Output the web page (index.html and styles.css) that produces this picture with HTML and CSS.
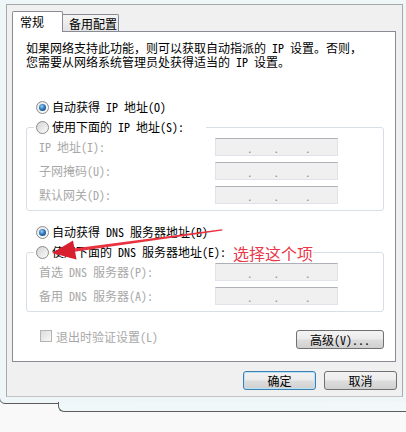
FILE: index.html
```html
<!DOCTYPE html>
<html lang="zh-CN">
<head>
<meta charset="utf-8">
<link rel="stylesheet" href="styles.css">
</head>
<body>
<div class="desk">
  <div class="window">
    <div class="client">
      <div class="tabs">
        <div class="tab active">常规</div>
        <div class="tab">备用配置</div>
      </div>
      <div class="panel">
        <p class="intro">如果网络支持此功能，则可以获取自动指派的 IP 设置。否则，<br>您需要从网络系统管理员处获得适当的 IP 设置。</p>
        <div class="radio-row top"><span class="radio on"></span><span>自动获得 IP 地址(O)</span></div>
        <fieldset class="group">
          <legend class="radio-row leg1"><span class="radio"></span><span>使用下面的 IP 地址(S):</span></legend>
          <div class="fields">
            <div class="field"><span class="lbl">IP 地址(I):</span><span class="ipbox"><span class="d1">.</span><span class="d2">.</span><span class="d3">.</span></span></div>
            <div class="field"><span class="lbl">子网掩码(U):</span><span class="ipbox"><span class="d1">.</span><span class="d2">.</span><span class="d3">.</span></span></div>
            <div class="field"><span class="lbl">默认网关(D):</span><span class="ipbox"><span class="d1">.</span><span class="d2">.</span><span class="d3">.</span></span></div>
          </div>
        </fieldset>
        <div class="radio-row mid"><span class="radio on"></span><span>自动获得 DNS 服务器地址(B)</span></div>
        <fieldset class="group">
          <legend class="radio-row leg2"><span class="radio"></span><span>使用下面的 DNS 服务器地址(E):</span></legend>
          <div class="fields">
            <div class="field"><span class="lbl">首选 DNS 服务器(P):</span><span class="ipbox"><span class="d1">.</span><span class="d2">.</span><span class="d3">.</span></span></div>
            <div class="field"><span class="lbl">备用 DNS 服务器(A):</span><span class="ipbox"><span class="d1">.</span><span class="d2">.</span><span class="d3">.</span></span></div>
          </div>
        </fieldset>
        <div class="bottom-row">
          <label class="check"><span class="box"></span><span>退出时验证设置(L)</span></label>
          <button class="btn adv">高级(V)...</button>
        </div>
      </div>
      <div class="actions">
        <button class="btn default">确定</button>
        <button class="btn">取消</button>
      </div>
    </div>
  </div>
  <div class="backwin"></div>
  <svg class="arrow" viewBox="0 0 406 432" width="406" height="432">
    <polygon points="222,229.2 222.5,230.6 74.5,251.8 73.5,248.4" fill="#e8323e"/>
    <polygon points="52,253 73,240.5 76.5,259.5" fill="#d8202f"/>
  </svg>
  <div class="note">选择这个项</div>
</div>
</body>
</html>
```

FILE: styles.css
```css
* { box-sizing: border-box; }
html, body { margin: 0; padding: 0; }
body {
  background: #f9f9f9;
  font-family: "Noto Sans Mono CJK SC", "Noto Sans CJK SC", sans-serif;
  font-size: 12px;
  color: #000;
  width: 406px;
  height: 432px;
  overflow: hidden;
}
.desk { position: relative; width: 406px; height: 432px; overflow: hidden; }

.window {
  position: absolute;
  left: -1px;
  top: -20px;
  width: 420px;
  height: 424px;
  background: #eff6f8;
  border: 1px solid #5c5c5c;
  border-radius: 0 0 0 6px;
  padding: 23px 0 0 6px;
}
.client {
  width: 397px;
  height: 393px;
  background: #f0f0f0;
  border: 1px solid #a9a9a9;
  border-bottom-color: #c4c4c4;
  padding: 6px 0 0 5px;
}

.tabs { display: flex; align-items: flex-end; height: 20px; }
.tab {
  font-family: "Noto Sans CJK SC", sans-serif;
  border: 1px solid #898c95;
  border-bottom: none;
  line-height: 15px;
}
.tab.active {
  position: relative;
  z-index: 1;
  width: 51px;
  height: 21px;
  margin-bottom: -1px;
  background: #fff;
  border-radius: 2px 2px 0 0;
  padding: 2px 0 0 7px;
  line-height: 16px;
}
.tab:not(.active) {
  width: 56px;
  height: 17px;
  border-left: none;
  border-radius: 0 2px 0 0;
  background: linear-gradient(#f4f4f4, #e3e3e3);
  padding: 1px 0 0 6px;
}

.panel {
  width: 384px;
  height: 331px;
  background: #fff;
  border: 1px solid #898c95;
  padding: 9px 11px 0 13px;
}
.intro { margin: 0; line-height: 14px; white-space: nowrap; }

.radio-row {
  display: flex;
  align-items: center;
  gap: 3px;
  height: 16px;
  white-space: nowrap;
  line-height: 16px;
}
.radio-row.top { margin: 30px 0 0 10px; }
.radio-row.mid { margin: 13px 0 0 10px; }
.radio {
  flex: none;
  width: 13px;
  height: 13px;
  border-radius: 50%;
  border: 1px solid #8b8b8b;
  background: linear-gradient(135deg, #d4d4d4, #fbfbfb);
}
.radio.on {
  display: grid;
  place-items: center;
  background: linear-gradient(135deg, #e6e6e6, #ffffff);
}
.radio.on::after {
  content: "";
  width: 7px;
  height: 7px;
  border-radius: 50%;
  background: radial-gradient(circle at 40% 35%, #9fd0f5 0, #2d78bb 45%, #0c3c6e 100%);
}

.group {
  margin: 4px 0 0 0;
  width: 358px;
  padding: 3px 6px 6px 7px;
  border: 1px solid #d5dfe5;
  border-radius: 3px;
  min-width: 0;
}
.group legend { padding: 0 0 0 2px; }
.leg1 { width: 172px; }
.leg2 { width: 279px; }

.fields { display: flex; flex-direction: column; gap: 6px; }
.field {
  display: grid;
  grid-template-columns: 176px 123px;
  align-items: center;
  height: 18px;
  margin-left: 5px;
}
.lbl { color: #a8a8a8; white-space: nowrap; line-height: 16px; }
.ipbox {
  display: flex;
  align-items: flex-end;
  height: 18px;
  background: #f0f0f0;
  border: 1px solid #e2e3ea;
  border-top-color: #adb0b6;
  padding: 0 0 2px 31px;
  line-height: 9px;
  font-size: 11px;
  color: #8a8a8a;
}
.ipbox .d2 { margin-left: 21px; }
.ipbox .d3 { margin-left: 26px; }

.bottom-row {
  display: flex;
  justify-content: space-between;
  align-items: flex-start;
  margin-top: 16px;
  height: 21px;
}
.check {
  display: flex;
  align-items: center;
  gap: 4px;
  height: 16px;
  margin-left: 14px;
  color: #a8a8a8;
}
.check .box {
  width: 12px;
  height: 12px;
  border: 1px solid #b4b4b4;
  background: linear-gradient(135deg, #dcdcdc, #f8f8f8);
}

.btn {
  font: inherit;
  font-family: "Noto Sans CJK SC", sans-serif;
  height: 19px;
  padding: 0;
  border: 1px solid #707070;
  border-radius: 3px;
  background: linear-gradient(#f3f3f3 0%, #ebebeb 48%, #dddddd 52%, #d0d0d0 100%);
  color: #000;
  line-height: 16px;
}
.btn.adv { width: 88px; margin-top: 2px; font-family: "Noto Sans Mono CJK SC", "Noto Sans CJK SC", sans-serif; }
.actions {
  display: flex;
  justify-content: flex-end;
  gap: 8px;
  margin-top: 9px;
  padding-right: 5px;
}
.actions .btn { width: 73px; }
.btn.default {
  border-color: #3c7fb1;
  box-shadow: inset 0 0 0 1px #b9e2f7;
}

.backwin {
  position: absolute;
  left: 58px;
  top: 402px;
  width: 360px;
  height: 10px;
  background: linear-gradient(90deg, #eef7f9, #f3f8fa);
  border-left: 1px solid #5c5c5c;
  border-bottom: 1px solid #5c5c5c;
  border-radius: 0 0 0 6px;
}

.arrow { position: absolute; left: 0; top: 0; pointer-events: none; }
.note {
  position: absolute;
  left: 233px;
  top: 244px;
  font-family: "Noto Sans CJK SC", sans-serif;
  font-size: 16px;
  line-height: 18px;
  color: #e8384a;
  white-space: nowrap;
}
```
